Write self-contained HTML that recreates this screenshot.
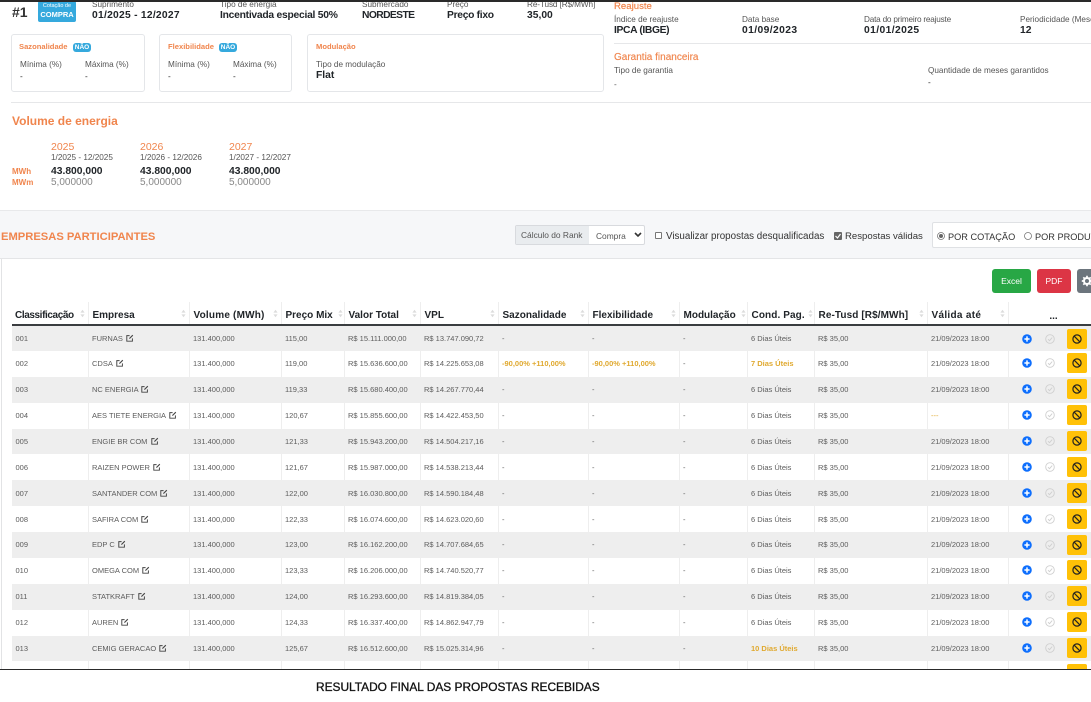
<!DOCTYPE html>
<html lang="pt-BR"><head><meta charset="utf-8"><title>Resultado</title>
<style>
*{box-sizing:border-box}
html,body{margin:0;padding:0;background:#fff}
body{width:1091px;height:702px;overflow:hidden;position:relative;font-family:"Liberation Sans",sans-serif;color:#212529;filter:blur(.25px)}
.a{position:absolute;white-space:nowrap;line-height:12px}
.l{font-size:8.2px;color:#555}
.v{font-size:10.3px;font-weight:bold;color:#212529}
.o{color:#f0854d}
.card{position:absolute;background:#fff;border:1px solid #e4e6e9;border-radius:3px;height:58px;top:34px}
.b{position:absolute;background:#35a9dd;color:#fff;font-size:6.5px;font-weight:bold;border-radius:3px;height:9px;line-height:9px;text-align:center;width:18px;top:43px}
.hr{position:absolute;height:1px;background:#e6e7e9}
table{position:absolute;left:12px;top:302px;width:1079px;border-collapse:collapse;table-layout:fixed;font-size:7.5px;color:#5c5c5c}
th{height:23px;border-bottom:2px solid #3a3d40;border-right:1px solid #eee;font-size:10px;color:#212529;text-align:left;padding:4px 0 0 4px;white-space:nowrap;position:relative;overflow:visible}
td{height:25.88px;padding:0 0 0 3.5px;border-right:1px solid #eee;white-space:nowrap;position:relative;overflow:hidden}
tr:nth-child(odd) td{background:#eeeeee}
th svg.s{position:absolute;right:3px;top:7px}
.y{color:#e0a92f;font-weight:bold}
td svg.e{vertical-align:-1px;margin-left:1px}
.ic{position:absolute;left:13px;top:7.5px}
.ck{position:absolute;left:36px;top:7.5px}
.bn{position:absolute;left:58px;top:2.5px;width:20px;height:20px;background:#ffc107;border-radius:2px}
.bn svg{position:absolute;left:5px;top:5px}
.btn{position:absolute;top:269px;height:24px;border-radius:3px;color:#fff;font-size:8.5px;text-align:center;line-height:24px}
</style></head><body>
<svg width="0" height="0" style="position:absolute">
<symbol id="ext" viewBox="0 0 10 10"><path d="M8 5.5V9H1V2h3.5" fill="none" stroke="#444" stroke-width="1.2"/><path d="M4 6l1 0 4-4-1-1-4 4z" fill="#444"/></symbol>
<symbol id="srt" viewBox="0 0 6 10"><path d="M3 0.5L5.5 4H.5zM3 9.5L.5 6h5z" fill="#dcdcdc"/></symbol>
<symbol id="plus" viewBox="0 0 10 10"><circle cx="5" cy="5" r="4.8" fill="#0d6efd"/><path d="M5 2.4v5.2M2.4 5h5.2" stroke="#fff" stroke-width="1.5"/></symbol>
<symbol id="chk" viewBox="0 0 10 10"><circle cx="5" cy="5" r="4.3" fill="none" stroke="#cfcfcf" stroke-width=".9"/><path d="M3 5.2l1.5 1.5L7.2 3.6" fill="none" stroke="#cfcfcf" stroke-width=".9"/></symbol>
<symbol id="ban" viewBox="0 0 10 10"><circle cx="5" cy="5" r="4.1" fill="none" stroke="#222" stroke-width="1.2"/><path d="M2.1 2.1l5.8 5.8" stroke="#222" stroke-width="1.2"/></symbol>
</svg>

<div style="position:absolute;left:0;top:0;width:1091px;height:2px;background:#2a2a2a;z-index:9"></div>

<div class="a" style="left:12px;top:6px;font-size:14px;font-weight:bold;color:#333">#1</div>
<div style="position:absolute;left:38px;top:1px;width:38px;height:21px;background:#35a9dd;border-radius:2px;color:#fff;text-align:center">
<div style="font-size:5.5px;line-height:7px;margin-top:2px">Cotação de</div><div style="font-size:7.5px;font-weight:bold;line-height:10px">COMPRA</div></div>

<div class="a l" style="left:92px;top:-1px">Suprimento</div><div class="a v" style="left:92px;top:10px;letter-spacing:.25px">01/2025 - 12/2027</div>
<div class="a l" style="left:220px;top:-1px">Tipo de energia</div><div class="a v" style="left:220px;top:10px;letter-spacing:-.25px">Incentivada especial 50%</div>
<div class="a l" style="left:362px;top:-1px">Submercado</div><div class="a v" style="left:362px;top:10px;letter-spacing:-.6px">NORDESTE</div>
<div class="a l" style="left:447px;top:-1px">Preço</div><div class="a v" style="left:447px;top:10px;letter-spacing:-.3px">Preço fixo</div>
<div class="a l" style="left:527px;top:-1px;letter-spacing:-.1px">Re-Tusd [R$/MWh]</div><div class="a v" style="left:527px;top:10px">35,00</div>

<div class="card" style="left:11px;width:134px"></div>
<div class="a o" style="left:19px;top:41px;font-size:7.6px;font-weight:bold">Sazonalidade</div><div class="b" style="left:73px">NÃO</div>
<div class="a l" style="left:20px;top:59px">Mínima (%)</div><div class="a l" style="left:85px;top:59px">Máxima (%)</div>
<div class="a l" style="left:20px;top:71px;color:#222">-</div><div class="a l" style="left:85px;top:71px;color:#222">-</div>

<div class="card" style="left:159px;width:133px"></div>
<div class="a o" style="left:168px;top:41px;font-size:7.6px;font-weight:bold">Flexibilidade</div><div class="b" style="left:219px">NÃO</div>
<div class="a l" style="left:168px;top:59px">Mínima (%)</div><div class="a l" style="left:233px;top:59px">Máxima (%)</div>
<div class="a l" style="left:168px;top:71px;color:#222">-</div><div class="a l" style="left:233px;top:71px;color:#222">-</div>

<div class="card" style="left:307px;width:297px"></div>
<div class="a o" style="left:316px;top:41px;font-size:7.6px;font-weight:bold">Modulação</div>
<div class="a l" style="left:316px;top:59px">Tipo de modulação</div>
<div class="a v" style="left:316px;top:69.500px">Flat</div>

<div class="a o" style="left:614px;top:1px;font-size:9.600px;-webkit-text-stroke:.2px #f0854d">Reajuste</div>
<div class="a l" style="left:614px;top:14px">Índice de reajuste</div><div class="a v" style="left:614px;top:25px;letter-spacing:-.35px">IPCA (IBGE)</div>
<div class="a l" style="left:742px;top:14px">Data base</div><div class="a v" style="left:742px;top:25px;letter-spacing:.4px">01/09/2023</div>
<div class="a l" style="left:864px;top:14px;letter-spacing:-.2px">Data do primeiro reajuste</div><div class="a v" style="left:864px;top:25px;letter-spacing:.4px">01/01/2025</div>
<div class="a l" style="left:1020px;top:14px">Periodicidade (Meses)</div><div class="a v" style="left:1020px;top:25px">12</div>
<div class="hr" style="left:614px;top:43px;width:477px"></div>
<div class="a o" style="left:614px;top:52px;font-size:10px;-webkit-text-stroke:.15px #f0854d">Garantia financeira</div>
<div class="a l" style="left:614px;top:65px">Tipo de garantia</div><div class="a l" style="left:614px;top:79px">-</div>
<div class="a l" style="left:928px;top:65px">Quantidade de meses garantidos</div><div class="a l" style="left:928px;top:77px;color:#222">-</div>

<div class="hr" style="left:11px;top:102px;width:1080px"></div>
<div class="a o" style="left:12px;top:115px;font-size:12px;font-weight:bold">Volume de energia</div>

<div class="a o" style="left:51px;top:141px;font-size:10.5px">2025</div>
<div class="a l" style="left:51px;top:152px">1/2025 - 12/2025</div>
<div class="a v" style="left:51px;top:165.500px">43.800,000</div>
<div class="a" style="left:51px;top:177px;font-size:10px;color:#888">5,000000</div>
<div class="a o" style="left:140px;top:141px;font-size:10.5px">2026</div>
<div class="a l" style="left:140px;top:152px">1/2026 - 12/2026</div>
<div class="a v" style="left:140px;top:165.500px">43.800,000</div>
<div class="a" style="left:140px;top:177px;font-size:10px;color:#888">5,000000</div>
<div class="a o" style="left:229px;top:141px;font-size:10.5px">2027</div>
<div class="a l" style="left:229px;top:152px">1/2027 - 12/2027</div>
<div class="a v" style="left:229px;top:165.500px">43.800,000</div>
<div class="a" style="left:229px;top:177px;font-size:10px;color:#888">5,000000</div>
<div class="a o" style="left:12px;top:166px;font-size:8px;font-weight:bold">MWh</div>
<div class="a o" style="left:12px;top:176.500px;font-size:8px;font-weight:bold">MWm</div>

<div style="position:absolute;left:0;top:210px;width:1091px;height:49px;background:#f6f7f9;border-top:1px solid #e8e9eb;border-bottom:1px solid #e4e5e7"></div>
<div class="a o" style="left:1px;top:230.500px;font-size:11.2px;font-weight:bold">EMPRESAS PARTICIPANTES</div>

<div style="position:absolute;left:515px;top:225px;width:130px;height:20px;border:1px solid #d8dade;border-radius:2px;background:#fff"></div>
<div style="position:absolute;left:516px;top:226px;width:73px;height:18px;background:#e9ecef"></div>
<div class="a" style="left:521px;top:229px;font-size:8.4px;color:#555">Cálculo do Rank</div>
<div class="a" style="left:596px;top:230px;font-size:8.4px;color:#555">Compra</div>
<svg style="position:absolute;left:634px;top:232px" width="8" height="6" viewBox="0 0 8 6"><path d="M1 1l3 3 3-3" fill="none" stroke="#333" stroke-width="1.6"/></svg>
<div style="position:absolute;left:655px;top:232px;width:7px;height:7px;border:1px solid #777;border-radius:1px;background:#fff"></div>
<div class="a" style="left:666px;top:230.500px;font-size:9.800px;color:#333">Visualizar propostas desqualificadas</div>
<svg style="position:absolute;left:834px;top:232px" width="8" height="8" viewBox="0 0 8 8"><rect width="8" height="8" rx="1" fill="#666"/><path d="M1.500 4l2 2 3-4" fill="none" stroke="#fff" stroke-width="1.200"/></svg>
<div class="a" style="left:845px;top:230.500px;font-size:9.600px;color:#333">Respostas válidas</div>
<div style="position:absolute;left:932px;top:222px;width:165px;height:26px;background:#fff;border:1px solid #dfe1e4;border-radius:2px"></div>
<svg style="position:absolute;left:937px;top:232px" width="8" height="8" viewBox="0 0 8 8"><circle cx="4" cy="4" r="3.500" fill="#fff" stroke="#777" stroke-width=".8"/><circle cx="4" cy="4" r="2" fill="#666"/></svg>
<div class="a" style="left:948px;top:230.500px;font-size:9.200px;color:#333">POR COTAÇÃO</div>
<svg style="position:absolute;left:1024px;top:232px" width="8" height="8" viewBox="0 0 8 8"><circle cx="4" cy="4" r="3.500" fill="#fff" stroke="#777" stroke-width=".8"/></svg>
<div class="a" style="left:1035px;top:230.500px;font-size:9.200px;color:#333">POR PRODUTO</div>

<div style="position:absolute;left:1px;top:259px;width:1090px;height:410px;background:#fff;border-left:1px solid #e2e3e5"></div>
<div class="btn" style="left:992px;width:39px;background:#28a745">Excel</div>
<div class="btn" style="left:1037px;width:34px;background:#dc3545">PDF</div>
<div class="btn" style="left:1077px;width:20px;background:#6c757d">
<svg style="position:absolute;left:4px;top:6px" width="12" height="12" viewBox="0 0 12 12"><circle cx="6" cy="6" r="3" fill="none" stroke="#fff" stroke-width="2"/><path d="M6 .8v2.400M6 8.800v2.400M.8 6h2.400M8.800 6h2.400M2.300 2.300l1.700 1.700M8 8l1.700 1.700M2.300 9.700L4 8M8 4l1.700-1.700" stroke="#fff" stroke-width="1.700"/></svg></div>

<div style="position:absolute;left:0;top:0;width:1091px;height:669px;overflow:hidden">
<table>
<colgroup><col style="width:76px"><col style="width:101px"><col style="width:92px"><col style="width:63px"><col style="width:76px"><col style="width:78px"><col style="width:90px"><col style="width:91px"><col style="width:68px"><col style="width:67px"><col style="width:113px"><col style="width:81px"><col style="width:83px"></colgroup>
<thead><tr>
<th style="padding-left:3px;letter-spacing:-.4px">Classificação<svg class="s" width="5" height="9"><use href="#srt"/></svg></th>
<th>Empresa<svg class="s" width="5" height="9"><use href="#srt"/></svg></th>
<th style="letter-spacing:.2px">Volume (MWh)<svg class="s" width="5" height="9"><use href="#srt"/></svg></th>
<th>Preço Mix<svg class="s" width="5" height="9" style="right:1px"><use href="#srt"/></svg></th>
<th>Valor Total<svg class="s" width="5" height="9"><use href="#srt"/></svg></th>
<th>VPL<svg class="s" width="5" height="9"><use href="#srt"/></svg></th>
<th>Sazonalidade<svg class="s" width="5" height="9"><use href="#srt"/></svg></th>
<th>Flexibilidade<svg class="s" width="5" height="9"><use href="#srt"/></svg></th>
<th>Modulação<svg class="s" width="5" height="9" style="right:1px"><use href="#srt"/></svg></th>
<th style="letter-spacing:.1px">Cond. Pag.<svg class="s" width="5" height="9" style="right:1px"><use href="#srt"/></svg></th>
<th style="letter-spacing:.1px">Re-Tusd [R$/MWh]<svg class="s" width="5" height="9"><use href="#srt"/></svg></th>
<th style="letter-spacing:.3px">Válida até<svg class="s" width="5" height="9"><use href="#srt"/></svg></th>
<th style="text-align:center;padding-left:8px;padding-right:0;padding-top:7px">...</th>
</tr></thead>
<tbody>
<tr><td>001</td><td>FURNAS <svg class="e" width="8" height="8"><use href="#ext"/></svg></td><td>131.400,000</td><td>115,00</td><td>R$ 15.111.000,00</td><td>R$ 13.747.090,72</td><td>-</td><td>-</td><td>-</td><td>6 Dias Úteis</td><td>R$ 35,00</td><td>21/09/2023 18:00</td><td><svg class="ic" width="10" height="10"><use href="#plus"/></svg><svg class="ck" width="10" height="10"><use href="#chk"/></svg><span class="bn"><svg width="10" height="10"><use href="#ban"/></svg></span></td></tr>
<tr><td>002</td><td>CDSA <svg class="e" width="8" height="8"><use href="#ext"/></svg></td><td>131.400,000</td><td>119,00</td><td>R$ 15.636.600,00</td><td>R$ 14.225.653,08</td><td class="y">-90,00% +110,00%</td><td class="y">-90,00% +110,00%</td><td>-</td><td class="y">7 Dias Úteis</td><td>R$ 35,00</td><td>21/09/2023 18:00</td><td><svg class="ic" width="10" height="10"><use href="#plus"/></svg><svg class="ck" width="10" height="10"><use href="#chk"/></svg><span class="bn"><svg width="10" height="10"><use href="#ban"/></svg></span></td></tr>
<tr><td>003</td><td>NC ENERGIA <svg class="e" width="8" height="8"><use href="#ext"/></svg></td><td>131.400,000</td><td>119,33</td><td>R$ 15.680.400,00</td><td>R$ 14.267.770,44</td><td>-</td><td>-</td><td>-</td><td>6 Dias Úteis</td><td>R$ 35,00</td><td>21/09/2023 18:00</td><td><svg class="ic" width="10" height="10"><use href="#plus"/></svg><svg class="ck" width="10" height="10"><use href="#chk"/></svg><span class="bn"><svg width="10" height="10"><use href="#ban"/></svg></span></td></tr>
<tr><td>004</td><td>AES TIETE ENERGIA <svg class="e" width="8" height="8"><use href="#ext"/></svg></td><td>131.400,000</td><td>120,67</td><td>R$ 15.855.600,00</td><td>R$ 14.422.453,50</td><td>-</td><td>-</td><td>-</td><td>6 Dias Úteis</td><td>R$ 35,00</td><td style="color:#e0a92f">---</td><td><svg class="ic" width="10" height="10"><use href="#plus"/></svg><svg class="ck" width="10" height="10"><use href="#chk"/></svg><span class="bn"><svg width="10" height="10"><use href="#ban"/></svg></span></td></tr>
<tr><td>005</td><td>ENGIE BR COM <svg class="e" width="8" height="8"><use href="#ext"/></svg></td><td>131.400,000</td><td>121,33</td><td>R$ 15.943.200,00</td><td>R$ 14.504.217,16</td><td>-</td><td>-</td><td>-</td><td>6 Dias Úteis</td><td>R$ 35,00</td><td>21/09/2023 18:00</td><td><svg class="ic" width="10" height="10"><use href="#plus"/></svg><svg class="ck" width="10" height="10"><use href="#chk"/></svg><span class="bn"><svg width="10" height="10"><use href="#ban"/></svg></span></td></tr>
<tr><td>006</td><td>RAIZEN POWER <svg class="e" width="8" height="8"><use href="#ext"/></svg></td><td>131.400,000</td><td>121,67</td><td>R$ 15.987.000,00</td><td>R$ 14.538.213,44</td><td>-</td><td>-</td><td>-</td><td>6 Dias Úteis</td><td>R$ 35,00</td><td>21/09/2023 18:00</td><td><svg class="ic" width="10" height="10"><use href="#plus"/></svg><svg class="ck" width="10" height="10"><use href="#chk"/></svg><span class="bn"><svg width="10" height="10"><use href="#ban"/></svg></span></td></tr>
<tr><td>007</td><td>SANTANDER COM <svg class="e" width="8" height="8"><use href="#ext"/></svg></td><td>131.400,000</td><td>122,00</td><td>R$ 16.030.800,00</td><td>R$ 14.590.184,48</td><td>-</td><td>-</td><td>-</td><td>6 Dias Úteis</td><td>R$ 35,00</td><td>21/09/2023 18:00</td><td><svg class="ic" width="10" height="10"><use href="#plus"/></svg><svg class="ck" width="10" height="10"><use href="#chk"/></svg><span class="bn"><svg width="10" height="10"><use href="#ban"/></svg></span></td></tr>
<tr><td>008</td><td>SAFIRA COM <svg class="e" width="8" height="8"><use href="#ext"/></svg></td><td>131.400,000</td><td>122,33</td><td>R$ 16.074.600,00</td><td>R$ 14.623.020,60</td><td>-</td><td>-</td><td>-</td><td>6 Dias Úteis</td><td>R$ 35,00</td><td>21/09/2023 18:00</td><td><svg class="ic" width="10" height="10"><use href="#plus"/></svg><svg class="ck" width="10" height="10"><use href="#chk"/></svg><span class="bn"><svg width="10" height="10"><use href="#ban"/></svg></span></td></tr>
<tr><td>009</td><td>EDP C <svg class="e" width="8" height="8"><use href="#ext"/></svg></td><td>131.400,000</td><td>123,00</td><td>R$ 16.162.200,00</td><td>R$ 14.707.684,65</td><td>-</td><td>-</td><td>-</td><td>6 Dias Úteis</td><td>R$ 35,00</td><td>21/09/2023 18:00</td><td><svg class="ic" width="10" height="10"><use href="#plus"/></svg><svg class="ck" width="10" height="10"><use href="#chk"/></svg><span class="bn"><svg width="10" height="10"><use href="#ban"/></svg></span></td></tr>
<tr><td>010</td><td>OMEGA COM <svg class="e" width="8" height="8"><use href="#ext"/></svg></td><td>131.400,000</td><td>123,33</td><td>R$ 16.206.000,00</td><td>R$ 14.740.520,77</td><td>-</td><td>-</td><td>-</td><td>6 Dias Úteis</td><td>R$ 35,00</td><td>21/09/2023 18:00</td><td><svg class="ic" width="10" height="10"><use href="#plus"/></svg><svg class="ck" width="10" height="10"><use href="#chk"/></svg><span class="bn"><svg width="10" height="10"><use href="#ban"/></svg></span></td></tr>
<tr><td>011</td><td>STATKRAFT <svg class="e" width="8" height="8"><use href="#ext"/></svg></td><td>131.400,000</td><td>124,00</td><td>R$ 16.293.600,00</td><td>R$ 14.819.384,05</td><td>-</td><td>-</td><td>-</td><td>6 Dias Úteis</td><td>R$ 35,00</td><td>21/09/2023 18:00</td><td><svg class="ic" width="10" height="10"><use href="#plus"/></svg><svg class="ck" width="10" height="10"><use href="#chk"/></svg><span class="bn"><svg width="10" height="10"><use href="#ban"/></svg></span></td></tr>
<tr><td>012</td><td>AUREN <svg class="e" width="8" height="8"><use href="#ext"/></svg></td><td>131.400,000</td><td>124,33</td><td>R$ 16.337.400,00</td><td>R$ 14.862.947,79</td><td>-</td><td>-</td><td>-</td><td>6 Dias Úteis</td><td>R$ 35,00</td><td>21/09/2023 18:00</td><td><svg class="ic" width="10" height="10"><use href="#plus"/></svg><svg class="ck" width="10" height="10"><use href="#chk"/></svg><span class="bn"><svg width="10" height="10"><use href="#ban"/></svg></span></td></tr>
<tr><td>013</td><td>CEMIG GERACAO <svg class="e" width="8" height="8"><use href="#ext"/></svg></td><td>131.400,000</td><td>125,67</td><td>R$ 16.512.600,00</td><td>R$ 15.025.314,96</td><td>-</td><td>-</td><td>-</td><td class="y">10 Dias Úteis</td><td>R$ 35,00</td><td>21/09/2023 18:00</td><td><svg class="ic" width="10" height="10"><use href="#plus"/></svg><svg class="ck" width="10" height="10"><use href="#chk"/></svg><span class="bn"><svg width="10" height="10"><use href="#ban"/></svg></span></td></tr>
<tr><td></td><td></td><td></td><td></td><td></td><td></td><td></td><td></td><td></td><td></td><td></td><td></td><td><span class="bn"></span></td></tr>
</tbody></table>
</div>

<div style="position:absolute;left:0;top:669px;width:1091px;height:33px;background:#fff;border-top:1px solid #2a2a2a"></div>
<div class="a" style="left:316px;top:681px;font-size:11.900px;color:#111;-webkit-text-stroke:.3px #111">RESULTADO FINAL DAS PROPOSTAS RECEBIDAS</div>
</body></html>
